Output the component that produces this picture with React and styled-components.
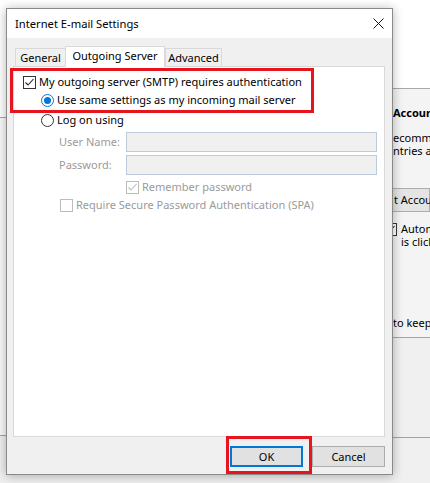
import React from "react";
import styled, { createGlobalStyle } from "styled-components";

const GlobalStyle = createGlobalStyle`
	html, body {
		margin: 0;
		padding: 0;
	}
	body {
		font-family: "Noto Sans", "Segoe UI", sans-serif;
		font-size: 11px;
		color: #000;
	}
`;

const CheckMark = ({ color }) => (
	<svg width="11" height="11" viewBox="0 0 11 11">
		<polyline
			points="1.5,5.5 4,8 9.5,2"
			fill="none"
			stroke={color}
			strokeWidth="1.1"
		/>
	</svg>
);

const CheckBox = ({ checked, disabled }) => (
	<Box $disabled={disabled}>
		{checked && <CheckMark color={disabled ? "#bcbcbc" : "#222"} />}
	</Box>
);

const Radio = ({ checked }) => (
	<RadioRing $checked={checked}>{checked && <RadioDot />}</RadioRing>
);

const App = () => {
	return (
		<Screen>
			<GlobalStyle />
			{/* the Outlook window that sits behind the dialog */}
			<Backdrop>
				<BackLeft>
					<BackBlock $h={117} $bg="#ffffff" />
					<BackBlock $h={317} $bg="#fafafa" />
					<BackFill />
				</BackLeft>
				<BackRight>
					<BackHeader />
					<BackBody>
						<BackHeading>Account Settings</BackHeading>
						<BackLine $top={10}>ecommend that you test your account</BackLine>
						<BackLine>ntries are correct.</BackLine>
						<BackButton>t Account Settings ...</BackButton>
						<BackCheckRow>
							<BackBox>
								<CheckMark color="#222" />
							</BackBox>
							<div>
								<BackLine>Automatically test</BackLine>
								<BackLine>is clicked</BackLine>
							</div>
						</BackCheckRow>
						<BackLine $top={68}>to keep offline:</BackLine>
					</BackBody>
					<BackBlock $h={99} $bg="#f0f0f0" />
					<BackFill />
				</BackRight>
			</Backdrop>

			<Dialog>
				<TitleBar>
					<Title>Internet E-mail Settings</Title>
					<CloseButton>
						<svg width="11" height="11" viewBox="0 0 11 11">
							<path
								d="M0.5 0.5 L10.5 10.5 M10.5 0.5 L0.5 10.5"
								stroke="#111"
								strokeWidth="1"
							/>
						</svg>
					</CloseButton>
				</TitleBar>
				<Body>
					<TabRow>
						<Tab $w={51}>General</Tab>
						<Tab $w={100} $active>
							Outgoing Server
						</Tab>
						<Tab $w={57}>Advanced</Tab>
					</TabRow>
					<Panel>
						<Row $top={0} $indent={0}>
							<CheckBox checked />
							<Label>My outgoing server (SMTP) requires authentication</Label>
						</Row>
						<Row $top={4} $indent={18}>
							<Radio checked />
							<Label>Use same settings as my incoming mail server</Label>
						</Row>
						<Row $top={6} $indent={18}>
							<Radio />
							<Label>Log on using</Label>
						</Row>
						<FieldRow $top={4}>
							<FieldLabel>User Name:</FieldLabel>
							<Field />
						</FieldRow>
						<FieldRow $top={2}>
							<FieldLabel>Password:</FieldLabel>
							<Field />
						</FieldRow>
						<Row $top={5} $indent={103}>
							<CheckBox checked disabled />
							<Label $disabled>Remember password</Label>
						</Row>
						<Row $top={4} $indent={37}>
							<CheckBox disabled />
							<Label $disabled>
								Require Secure Password Authentication (SPA)
							</Label>
						</Row>
					</Panel>
					<Footer>
						<Button $default>OK</Button>
						<Button>Cancel</Button>
					</Footer>
				</Body>
			</Dialog>

			<Highlight $x={10} $y={68} $w={304} $h={45} />
			<Highlight $x={226} $y={436} $w={86} $h={38} />
		</Screen>
	);
};

const Screen = styled.div`
	position: relative;
	width: 430px;
	height: 483px;
	overflow: hidden;
	background: #f0f0f0;
`;

const Backdrop = styled.div`
	display: flex;
	height: 100%;
`;

const BackLeft = styled.div`
	width: 380px;
	display: flex;
	flex-direction: column;
`;

const BackRight = styled.div`
	flex: 1;
	display: flex;
	flex-direction: column;
	min-width: 0;
	overflow: hidden;
	white-space: nowrap;
`;

const BackBlock = styled.div`
	height: ${(p) => p.$h}px;
	background: ${(p) => p.$bg};
	border-bottom: 1px solid #a3a3a3;
	flex-shrink: 0;
`;

const BackFill = styled.div`
	flex: 1;
	background: #f0f0f0;
`;

const BackHeader = styled.div`
	height: 88px;
	background: #ffffff;
	border-bottom: 1px solid #a8a8a8;
	flex-shrink: 0;
`;

const BackBody = styled.div`
	height: 248px;
	flex-shrink: 0;
	padding-left: 13px;
	background: #f4f4f4;
	border-bottom: 1px solid #a3a3a3;
	display: flex;
	flex-direction: column;
`;

const BackHeading = styled.div`
	margin-top: 16px;
	font-weight: 700;
	line-height: 16px;
`;

const BackLine = styled.div`
	margin-top: ${(p) => p.$top || 0}px;
	line-height: 13px;
`;

const BackButton = styled.div`
	margin-top: 31px;
	margin-left: -40px;
	height: 22px;
	line-height: 22px;
	padding-left: 40px;
	background: #e4e4e4;
	border: 1px solid #adadad;
`;

const BackCheckRow = styled.div`
	margin-top: 10px;
	margin-left: -9px;
	display: flex;
	gap: 4px;
`;

const BackBox = styled.div`
	width: 11px;
	height: 11px;
	margin-top: 1px;
	border: 1px solid #333;
	background: #fff;
	display: flex;
	flex-shrink: 0;
`;

const Dialog = styled.div`
	position: absolute;
	left: 6px;
	top: 8px;
	width: 387px;
	height: 467px;
	box-sizing: border-box;
	border: 1px solid #8a8a8a;
	background: #f0f0f0;
	box-shadow: 0 1px 10px rgba(0, 0, 0, 0.3);
	display: flex;
	flex-direction: column;
`;

const TitleBar = styled.div`
	height: 29px;
	background: #ffffff;
	display: flex;
	align-items: center;
	justify-content: space-between;
	padding-left: 8px;
`;

const Title = styled.div`
	font-size: 11.2px;
`;

const CloseButton = styled.div`
	width: 28px;
	height: 29px;
	display: flex;
	align-items: center;
	justify-content: center;
`;

const Body = styled.div`
	flex: 1;
	display: flex;
	flex-direction: column;
	padding: 9px 7px 0 6px;
`;

const TabRow = styled.div`
	height: 20px;
	display: flex;
	align-items: flex-end;
	padding-left: 2px;
	position: relative;
	z-index: 1;
	margin-bottom: -1px;
`;

const Tab = styled.div`
	width: ${(p) => p.$w}px;
	height: ${(p) => (p.$active ? "21px" : "19px")};
	box-sizing: border-box;
	display: flex;
	justify-content: center;
	align-items: center;
	padding-bottom: ${(p) => (p.$active ? "2px" : "0")};
	border: 1px solid #d9d9d9;
	border-bottom: 1px solid ${(p) => (p.$active ? "#ffffff" : "#d9d9d9")};
	margin-left: ${(p) => (p.$active ? "-1px" : "0")};
	background: ${(p) => (p.$active ? "#ffffff" : "#f0f0f0")};
	position: relative;
	z-index: ${(p) => (p.$active ? 2 : 1)};
`;

const Panel = styled.div`
	height: 371px;
	box-sizing: border-box;
	background: #ffffff;
	border: 1px solid #d9d9d9;
	padding: 8px 7px 0 9px;
	display: flex;
	flex-direction: column;
`;

const Row = styled.div`
	display: flex;
	align-items: center;
	gap: 3px;
	height: 14px;
	margin-top: ${(p) => p.$top}px;
	margin-left: ${(p) => p.$indent}px;
`;

const Label = styled.span`
	white-space: nowrap;
	line-height: 14px;
	color: ${(p) => (p.$disabled ? "#9a9a9a" : "#000")};
`;

const Box = styled.div`
	width: 13px;
	height: 13px;
	box-sizing: border-box;
	border: 1px solid ${(p) => (p.$disabled ? "#bcbcbc" : "#333")};
	background: #fff;
	display: flex;
	flex-shrink: 0;
`;

const RadioRing = styled.div`
	width: 13px;
	height: 13px;
	box-sizing: border-box;
	border-radius: 50%;
	border: 1px solid ${(p) => (p.$checked ? "#0078d7" : "#333")};
	background: #fff;
	display: flex;
	align-items: center;
	justify-content: center;
	flex-shrink: 0;
`;

const RadioDot = styled.div`
	width: 7px;
	height: 7px;
	border-radius: 50%;
	background: #0078d7;
`;

const FieldRow = styled.div`
	display: flex;
	align-items: center;
	height: 21px;
	margin-top: ${(p) => p.$top}px;
	margin-left: 36px;
`;

const FieldLabel = styled.span`
	width: 67px;
	color: #9a9a9a;
	white-space: nowrap;
`;

const Field = styled.div`
	flex: 1;
	height: 20px;
	box-sizing: border-box;
	border: 1px solid #bccad9;
	background: #f0f0f0;
`;

const Footer = styled.div`
	display: flex;
	justify-content: flex-end;
	gap: 9px;
	padding-top: 9px;
`;

const Button = styled.div`
	width: 73px;
	height: 21px;
	box-sizing: border-box;
	display: flex;
	align-items: center;
	justify-content: center;
	background: #e1e1e1;
	border: ${(p) => (p.$default ? "2px solid #0078d7" : "1px solid #adadad")};
`;

const Highlight = styled.div`
	position: absolute;
	left: ${(p) => p.$x}px;
	top: ${(p) => p.$y}px;
	width: ${(p) => p.$w}px;
	height: ${(p) => p.$h}px;
	box-sizing: border-box;
	border: 3px solid #e8141d;
	pointer-events: none;
`;

export default App;
